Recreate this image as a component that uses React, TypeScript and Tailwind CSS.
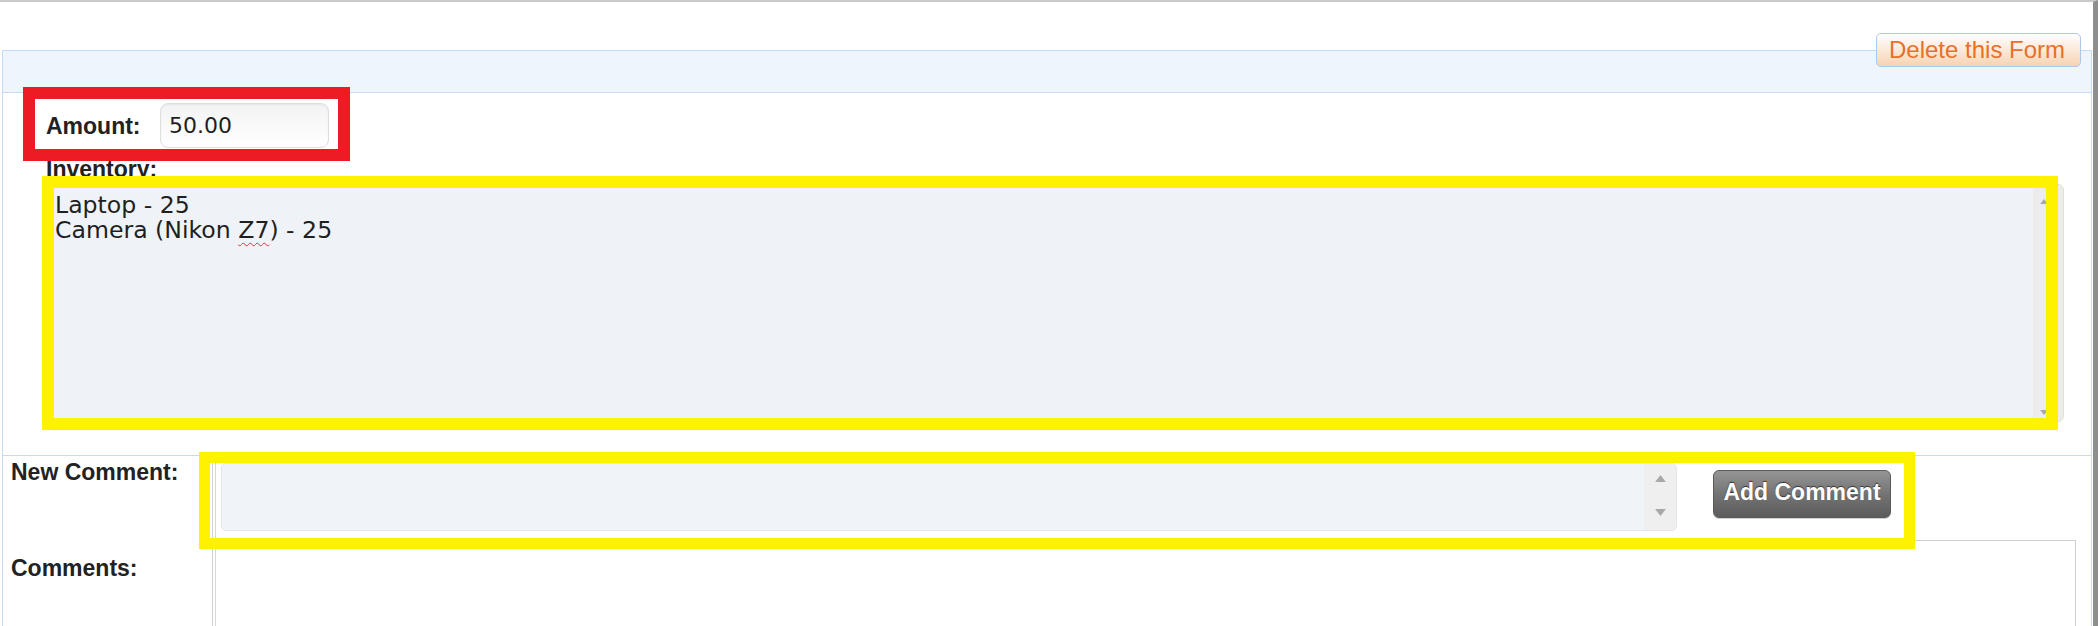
import React from 'react'

const labelCls = "font-['Liberation_Sans',Arial,sans-serif] text-[23px] leading-[26px] font-bold text-[#222]"
const fieldText = "font-['DejaVu_Sans',Verdana,sans-serif] text-[22px] leading-[25px] text-[#1f1f1f]"
const areaText = "font-['DejaVu_Sans',Verdana,sans-serif] text-[23.6px] leading-[25px] text-[#1f1f1f]"

const Arrow = ({ down, w }: { down?: boolean; w: number }) => (
    <svg width={w} height={Math.round(w * 0.65)} viewBox="0 0 10 6.5">
        <path d={down ? 'M0 0h10L5 6.5z' : 'M5 0l5 6.5H0z'} fill="#a8a8a8" />
    </svg>
)

const App = () => {
    return (
        <div className='relative w-[2098px] h-[626px] overflow-hidden bg-white'>
            <div className='h-full border-t-2 border-r-[5px] border-t-[#c9c9c9] border-r-[#8e8e8e] pt-[48px]'>
                <div className='ml-[2px] mr-[1px] h-[576px] border-l border-t border-r border-[#c5dbf5]'>
                    {/* header bar */}
                    <div className='relative h-[42px] bg-[#eef5fd] border-b border-[#c5dbf5]'>
                        <button className="absolute right-[10px] -top-[18px] w-[205px] h-[34px] rounded-[5px] border border-[#a9c9ef] bg-gradient-to-b from-white to-[#f6d3b2] pl-[12px] text-left font-['Liberation_Sans',Arial,sans-serif] text-[24px] leading-[30px] text-[#e8702a]">
                            Delete this Form
                        </button>
                    </div>

                    {/* form body */}
                    <div className='h-[363px] pt-[10px] pl-[43px] border-b border-[#c5dbf5]'>
                        <div className='flex items-center h-[45px]'>
                            <span className={`${labelCls} w-[114px]`}>Amount:</span>
                            <div className={`${fieldText} w-[169px] h-[45px] flex items-center pl-[8px] rounded-[8px] border border-[#dedede] bg-gradient-to-b from-[#f3f3f3] to-white shadow-[inset_0_1px_2px_rgba(0,0,0,0.06)]`}>
                                50.00
                            </div>
                        </div>
                        <div className={`${labelCls} mt-[8px]`}>Inventory:</div>
                        <div className='mt-[2px] ml-[4px] w-[2014px] h-[238px] flex rounded-[6px] border border-[#dbe0e7] bg-[#eff3f8] overflow-hidden'>
                            <div className={`${areaText} flex-1 pl-[4px] pt-[8px]`}>
                                <div>Laptop - 25</div>
                                <div>
                                    Camera (Nikon <span className='underline decoration-wavy decoration-[#e0313c] decoration-1 underline-offset-[4px]'>Z7</span>) - 25
                                </div>
                            </div>
                            <div className='w-[30px] flex flex-col justify-between pl-[7px] pt-[14px] pb-[6px] bg-[#ececec]'>
                                <Arrow w={8} />
                                <Arrow down w={8} />
                            </div>
                        </div>
                    </div>

                    {/* comments */}
                    <div className='flex h-[170px]'>
                        <div className='w-[209px] pl-[8px] pt-[3px]'>
                            <div className={labelCls}>New Comment:</div>
                            <div className={`${labelCls} mt-[70px]`}>Comments:</div>
                        </div>
                        <div className='flex-1 border-l border-[#d0d0d0] pl-[2px]'>
                            <div className='h-full border-l border-[#d6d6d6] pt-[7px]'>
                                <div className='flex items-start'>
                                    <div className='ml-[5px] w-[1456px] h-[68px] flex rounded-[5px] border border-[#e2e7ee] bg-[#f0f3f8] overflow-hidden'>
                                        <div className='flex-1' />
                                        <div className='w-[32px] flex flex-col items-center justify-between pt-[11px] pb-[14px] bg-[#efefef]'>
                                            <Arrow w={11} />
                                            <Arrow down w={11} />
                                        </div>
                                    </div>
                                    <button className="ml-[36px] mt-[7px] w-[178px] h-[48px] rounded-[6px] border border-[#5a5a5a] bg-gradient-to-b from-[#959595] via-[#747474] to-[#5c5c5c] shadow-[0_1px_0_#d0d0d0] pb-[3px] font-['Liberation_Sans',Arial,sans-serif] text-[23px] font-bold text-white [text-shadow:0_-1px_1px_#333]">
                                        Add Comment
                                    </button>
                                </div>
                                <div className='mt-[9px] w-[1860px] h-[100px] border-t border-r border-[#cfcfcf]' />
                            </div>
                        </div>
                    </div>
                </div>
            </div>

            {/* annotation boxes */}
            <div className='pointer-events-none absolute left-[23px] top-[87px] w-[327px] h-[74px] border-[12px] border-[#ed1c24]' />
            <div className='pointer-events-none absolute left-[42px] top-[176px] w-[2016px] h-[254px] border-[12px] border-[#fff200]' />
            <div className='pointer-events-none absolute left-[199px] top-[452px] w-[1716px] h-[97px] border-[11px] border-[#fff200]' />
        </div>
    )
}

export default App
